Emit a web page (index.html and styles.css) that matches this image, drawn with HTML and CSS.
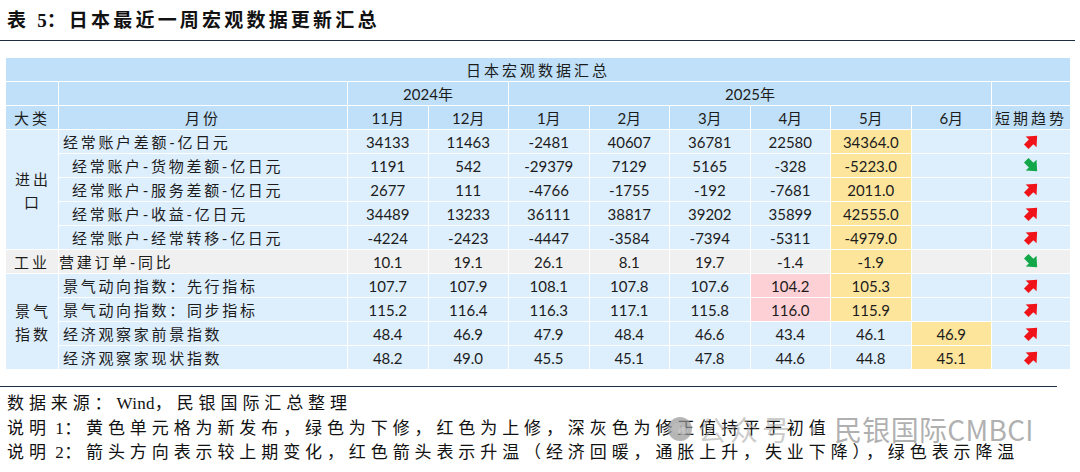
FILE: index.html
```html
<!DOCTYPE html>
<html lang="zh-CN">
<head>
<meta charset="utf-8">
<title>日本最近一周宏观数据更新汇总</title>
<link rel="stylesheet" href="styles.css">
</head>
<body>
<div class="page">
  <h1 class="title">表 <span class="lat">5</span>：日本最近一周宏观数据更新汇总</h1>

  <table class="macro">
    <colgroup>
      <col class="c-cat"><col class="c-name">
      <col class="c-m"><col class="c-m"><col class="c-m"><col class="c-m">
      <col class="c-m"><col class="c-m"><col class="c-m"><col class="c-m">
      <col class="c-trend">
    </colgroup>
    <thead>
      <tr class="hdr"><th colspan="11" class="caption-cell">日本宏观数据汇总</th></tr>
      <tr class="hdr"><th></th><th></th><th colspan="2">2024年</th><th colspan="6">2025年</th><th></th></tr>
      <tr class="hdr">
        <th class="cat">大类</th><th class="cn">月份</th>
        <th>11月</th><th>12月</th><th>1月</th><th>2月</th><th>3月</th><th>4月</th><th>5月</th><th>6月</th>
        <th class="cn">短期趋势</th>
      </tr>
    </thead>
    <tbody>
      <tr>
        <td class="cat" rowspan="5"><span class="cat-text">进出<br>口</span></td>
        <td class="label lead">经常账户差额-亿日元</td>
        <td>34133</td><td>11463</td><td>-2481</td><td>40607</td><td>36781</td><td>22580</td><td class="new">34364.0</td><td></td>
        <td class="trend"><svg class="arrow up" viewBox="0 0 16 16"><polygon points="1,5 7.5,5 7.5,0.8 15.5,8 7.5,15.2 7.5,11 1,11" transform="rotate(-45 8 8)"/></svg></td>
      </tr>
      <tr>
        <td class="label sub">经常账户-货物差额-亿日元</td>
        <td>1191</td><td>542</td><td>-29379</td><td>7129</td><td>5165</td><td>-328</td><td class="new">-5223.0</td><td></td>
        <td class="trend"><svg class="arrow down" viewBox="0 0 16 16"><polygon points="1,5 7.5,5 7.5,0.8 15.5,8 7.5,15.2 7.5,11 1,11" transform="rotate(45 8 8)"/></svg></td>
      </tr>
      <tr>
        <td class="label sub">经常账户-服务差额-亿日元</td>
        <td>2677</td><td>111</td><td>-4766</td><td>-1755</td><td>-192</td><td>-7681</td><td class="new">2011.0</td><td></td>
        <td class="trend"><svg class="arrow up" viewBox="0 0 16 16"><polygon points="1,5 7.5,5 7.5,0.8 15.5,8 7.5,15.2 7.5,11 1,11" transform="rotate(-45 8 8)"/></svg></td>
      </tr>
      <tr>
        <td class="label sub">经常账户-收益-亿日元</td>
        <td>34489</td><td>13233</td><td>36111</td><td>38817</td><td>39202</td><td>35899</td><td class="new">42555.0</td><td></td>
        <td class="trend"><svg class="arrow up" viewBox="0 0 16 16"><polygon points="1,5 7.5,5 7.5,0.8 15.5,8 7.5,15.2 7.5,11 1,11" transform="rotate(-45 8 8)"/></svg></td>
      </tr>
      <tr>
        <td class="label sub">经常账户-经常转移-亿日元</td>
        <td>-4224</td><td>-2423</td><td>-4447</td><td>-3584</td><td>-7394</td><td>-5311</td><td class="new">-4979.0</td><td></td>
        <td class="trend"><svg class="arrow up" viewBox="0 0 16 16"><polygon points="1,5 7.5,5 7.5,0.8 15.5,8 7.5,15.2 7.5,11 1,11" transform="rotate(-45 8 8)"/></svg></td>
      </tr>
      <tr class="grey">
        <td class="cat">工业</td>
        <td class="label tight">营建订单-同比</td>
        <td>10.1</td><td>19.1</td><td>26.1</td><td>8.1</td><td>19.7</td><td>-1.4</td><td class="new">-1.9</td><td></td>
        <td class="trend"><svg class="arrow down" viewBox="0 0 16 16"><polygon points="1,5 7.5,5 7.5,0.8 15.5,8 7.5,15.2 7.5,11 1,11" transform="rotate(45 8 8)"/></svg></td>
      </tr>
      <tr>
        <td class="cat" rowspan="4"><span class="cat-text">景气<br>指数</span></td>
        <td class="label lead">景气动向指数：先行指标</td>
        <td>107.7</td><td>107.9</td><td>108.1</td><td>107.8</td><td>107.6</td><td class="up-rev">104.2</td><td class="new">105.3</td><td></td>
        <td class="trend"><svg class="arrow up" viewBox="0 0 16 16"><polygon points="1,5 7.5,5 7.5,0.8 15.5,8 7.5,15.2 7.5,11 1,11" transform="rotate(-45 8 8)"/></svg></td>
      </tr>
      <tr>
        <td class="label lead">景气动向指数：同步指标</td>
        <td>115.2</td><td>116.4</td><td>116.3</td><td>117.1</td><td>115.8</td><td class="up-rev">116.0</td><td class="new">115.9</td><td></td>
        <td class="trend"><svg class="arrow up" viewBox="0 0 16 16"><polygon points="1,5 7.5,5 7.5,0.8 15.5,8 7.5,15.2 7.5,11 1,11" transform="rotate(-45 8 8)"/></svg></td>
      </tr>
      <tr>
        <td class="label lead">经济观察家前景指数</td>
        <td>48.4</td><td>46.9</td><td>47.9</td><td>48.4</td><td>46.6</td><td>43.4</td><td>46.1</td><td class="new">46.9</td>
        <td class="trend"><svg class="arrow up" viewBox="0 0 16 16"><polygon points="1,5 7.5,5 7.5,0.8 15.5,8 7.5,15.2 7.5,11 1,11" transform="rotate(-45 8 8)"/></svg></td>
      </tr>
      <tr>
        <td class="label lead">经济观察家现状指数</td>
        <td>48.2</td><td>49.0</td><td>45.5</td><td>45.1</td><td>47.8</td><td>44.6</td><td>44.8</td><td class="new">45.1</td>
        <td class="trend"><svg class="arrow up" viewBox="0 0 16 16"><polygon points="1,5 7.5,5 7.5,0.8 15.5,8 7.5,15.2 7.5,11 1,11" transform="rotate(-45 8 8)"/></svg></td>
      </tr>
    </tbody>
  </table>

  <div class="notes">
    <p>数据来源：<span class="lat">Wind</span>，民银国际汇总整理</p>
    <p>说明<span class="lat"> 1</span>：黄色单元格为新发布，绿色为下修，红色为上修，深灰色为修正值持平于初值</p>
    <p>说明<span class="lat"> 2</span>：箭头方向表示较上期变化，红色箭头表示升温（经济回暖，通胀上升，失业下降），绿色表示降温</p>
    <div class="watermark">
      <svg class="wm-logo" viewBox="0 0 24 24"><circle cx="12" cy="12" r="12"/><ellipse cx="10" cy="11" rx="6" ry="5" class="wm-in"/><ellipse cx="15" cy="14" rx="5" ry="4" class="wm-in2"/></svg>
      <span class="wm-a">公众号</span><span class="wm-dot">·</span><span class="wm-b">民银国际CMBCI</span>
    </div>
  </div>
</div>
</body>
</html>
```

FILE: styles.css
```css
html, body {
  margin: 0;
  padding: 0;
  background: #ffffff;
}

.page {
  width: 1080px;
  height: 472px;
  overflow: hidden;
  position: relative;
}

.title {
  margin: 0;
  width: 1075px;
  height: 41px;
  box-sizing: border-box;
  padding: 9px 0 0 7px;
  border-bottom: 1px solid #1f2d44;
  font-family: "Liberation Serif", "Noto Sans CJK SC", serif;
  font-weight: 700;
  font-size: 19px;
  line-height: 24px;
  letter-spacing: 3.2px;
  color: #111;
}

.title .lat {
  letter-spacing: 0;
}

.macro {
  margin: 16px 0 0 5px;
  width: 1065px;
  table-layout: fixed;
  border-collapse: collapse;
  font-family: "Lato", "Noto Sans CJK SC", sans-serif;
  font-size: 15px;
  color: #1c1c1c;
}

.c-cat { width: 53px; }
.c-name { width: 289px; }
.c-m { width: 80.5px; }
.c-trend { width: 79px; }

.macro th,
.macro td {
  height: 23px;
  padding: 0;
  border: 1px solid #ffffff;
  text-align: center;
  vertical-align: middle;
  line-height: 22px;
  white-space: nowrap;
  font-weight: 400;
}

.macro thead th {
  background: #bfe0f8;
}

.macro tbody td {
  background: #ddeefc;
}

.macro .caption-cell {
  letter-spacing: 3px;
  font-family: "Noto Sans CJK SC", sans-serif;
}

.macro .cn,
.macro .cat {
  letter-spacing: 3px;
  font-family: "Noto Sans CJK SC", sans-serif;
}

.cat-text {
  display: inline-block;
  line-height: 23px;
  padding-left: 2px;
}

.macro td.label {
  text-align: left;
  letter-spacing: 2.7px;
}

.macro td.lead { padding-left: 4px; }
.macro td.sub { padding-left: 13px; }
.macro td.tight { padding-left: 0; }

.macro tr.grey td {
  background: #f0f0f0;
}

.macro tbody td.new,
.macro tr.grey td.new {
  background: #fde59c;
}

.macro tbody td.up-rev {
  background: #fdd0d5;
}

.macro td.trend {
  line-height: 0;
}

.arrow {
  width: 17px;
  height: 17px;
  display: inline-block;
  vertical-align: middle;
}

.arrow.up { fill: #f0141a; }
.arrow.down { fill: #12a84a; }

.notes {
  position: relative;
  width: 1057px;
  margin-top: 16px;
  border-top: 1px solid #1f2d44;
  padding-top: 5px;
  font-family: "Liberation Serif", "Noto Sans CJK SC", serif;
  font-size: 17px;
  color: #111;
}

.notes p {
  margin: 0;
  padding-left: 7px;
  line-height: 24.5px;
  letter-spacing: 4.9px;
  white-space: nowrap;
}

.notes .lat {
  letter-spacing: 0.3px;
}

.watermark {
  position: absolute;
  left: 668px;
  top: 27px;
  display: flex;
  align-items: center;
  gap: 6px;
  font-family: "Noto Sans CJK SC", sans-serif;
  font-size: 28px;
  line-height: 30px;
  color: rgba(150, 150, 150, 0.75);
  white-space: nowrap;
}

.wm-logo {
  width: 24px;
  height: 24px;
  fill: rgba(150, 150, 150, 0.7);
}

.wm-logo .wm-in { fill: rgba(190, 190, 190, 0.6); }
.wm-logo .wm-in2 { fill: rgba(205, 205, 205, 0.6); }

.wm-a { color: rgba(170, 170, 170, 0.6); letter-spacing: 4px; }
.wm-dot { color: rgba(170, 170, 170, 0.6); }
.wm-b { letter-spacing: 0.3px; }
```
